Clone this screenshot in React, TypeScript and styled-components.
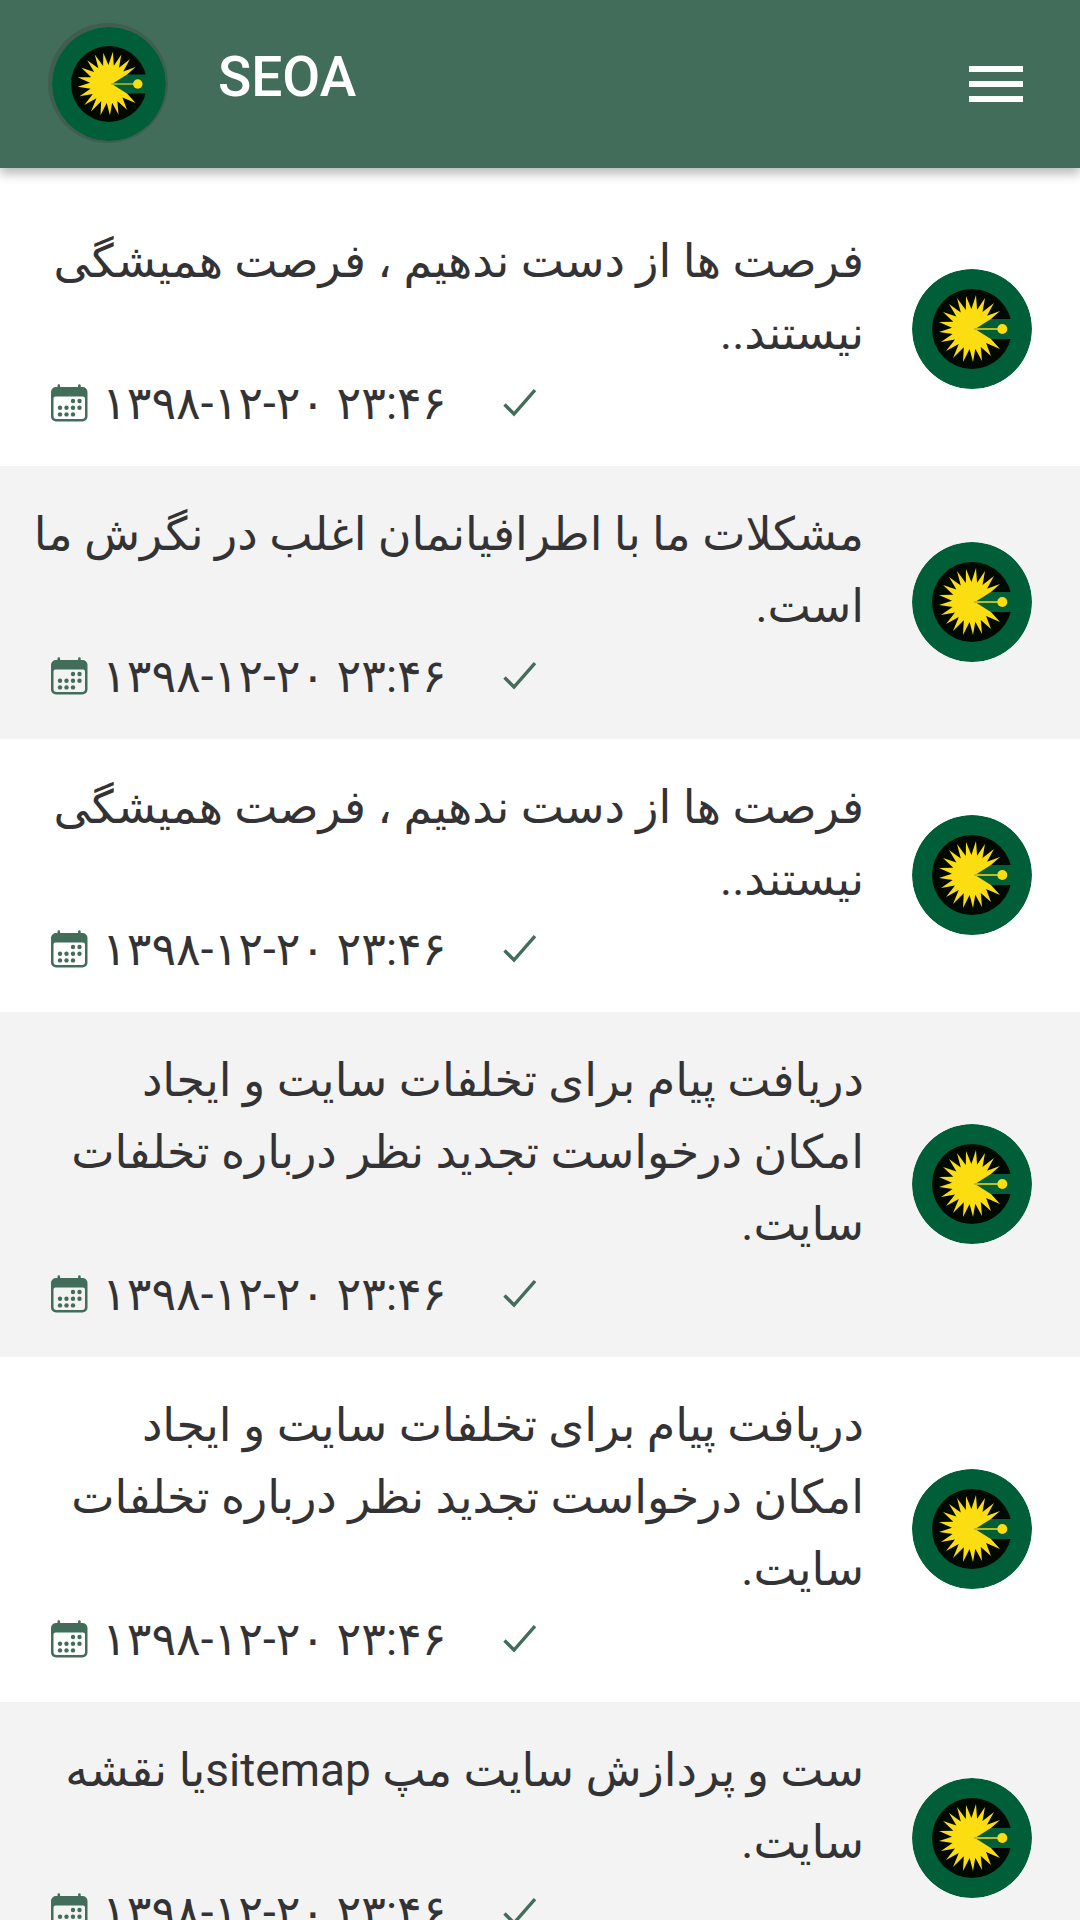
import React from "react";
import styled, { createGlobalStyle } from "styled-components";

const GlobalStyle = createGlobalStyle`
  *, *::before, *::after { box-sizing: border-box; }
  body {
    margin: 0;
    background: #ffffff;
    color: #333335;
    font-family: Roboto, "DejaVu Sans", sans-serif;
  }
`;

const Header = styled.header`
  position: relative;
  display: flex;
  align-items: center;
  gap: 52px;
  height: 168px;
  padding: 0 48px 0 52px;
  background: #426d5a;
  box-shadow: 0 6px 10px rgba(0, 0, 0, 0.27);
`;

const Logo = styled.svg<{ $ringed?: boolean }>`
  display: block;
  flex: none;
  width: ${(p) => (p.$ringed ? 114 : 120)}px;
  height: ${(p) => (p.$ringed ? 114 : 120)}px;
  border-radius: 50%;
  box-shadow: ${(p) => (p.$ringed ? "-1px -1px 0 3px #415d50" : "none")};
`;

const Title = styled.h1`
  flex: 1;
  margin: 0;
  padding-bottom: 14px;
  color: #ffffff;
  font-size: 55px;
  line-height: 64px;
  font-weight: 500;
`;

const MenuButton = styled.button`
  display: flex;
  padding: 8px;
  border: 0;
  background: none;
  cursor: pointer;
`;

const List = styled.ul`
  margin: 0;
  padding: 25px 0 0;
  list-style: none;
`;

const Row = styled.li`
  display: flex;
  align-items: center;
  gap: 48px;
  padding: 32px 48px 33px;

  &:nth-child(even) {
    background: #f3f3f3;
  }
`;

const Body = styled.div`
  flex: 1;
  min-width: 0;
`;

const Message = styled.p`
  margin: 0;
  font-size: 46px;
  line-height: 72px;
  white-space: nowrap;
`;

const Meta = styled.div`
  display: flex;
  align-items: center;
  direction: ltr;
  height: 64px;
  padding-top: 4px;
`;

const Stamp = styled.time`
  min-width: 352px;
  margin: 0 48px 0 14px;
  font-size: 46px;
  line-height: 60px;
  white-space: nowrap;
`;

const tips = [
  [88, 42], [82, 34], [73, 29], [64, 26], [54, 27], [45, 29], [37, 35], [31, 43], [27, 53],
  [27, 63], [29, 73], [34, 82], [41, 89], [51, 93], [61, 93], [70, 92], [79, 87], [88, 80],
];

const sunPath = (() => {
  const points: string[] = ["63,60", "79,50"];
  tips.forEach(([x, y], i) => {
    points.push(`${x},${y}`);
    const next = tips[i + 1];
    if (!next) return;
    const dx = (x + next[0]) / 2 - 60;
    const dy = (y + next[1]) / 2 - 60;
    const k = 20 / Math.hypot(dx, dy);
    points.push(`${(60 + dx * k).toFixed(1)},${(60 + dy * k).toFixed(1)}`);
  });
  points.push("79,70");
  return `M${points.join("L")}Z`;
})();

const Emblem = ({ ringed }: { ringed?: boolean }) => (
  <Logo $ringed={ringed} viewBox="0 0 120 120" aria-hidden="true">
    <circle cx="60" cy="60" r="60" fill="#005f39" />
    <circle cx="60" cy="60" r="40" fill="#000800" />
    <path d="M62 60L79 50H104V70H79Z" fill="#005f39" />
    <path d={sunPath} fill="#fbdd12" />
    <path d="M62 60H88" stroke="#bcbd1b" strokeWidth="1.8" />
    <circle cx="90.3" cy="60" r="5" fill="#fbdd12" />
  </Logo>
);

const CalendarIcon = () => (
  <svg width="40" height="38" viewBox="-1 0 40 38" aria-hidden="true">
    <path
      fill="#426d5a"
      fillRule="evenodd"
      d="M8.5 1.5a1.3 1.3 0 0 1 2.6 0V3h18V1.5a1.3 1.3 0 0 1 2.6 0V3H33.5a5 5 0 0 1 5 5v24.5a5 5 0 0 1-5 5H7a5 5 0 0 1-5-5V8a5 5 0 0 1 5-5h1.5zM6.5 12.5a2 2 0 0 0-2 2V32a3 3 0 0 0 3 3H33a3 3 0 0 0 3-3V14.5a2 2 0 0 0-2-2z"
    />
    <g fill="#426d5a">
      {[
        [24, 17], [30.5, 17],
        [11, 23.7], [17.5, 23.7], [24, 23.7], [30.5, 23.7],
        [11, 30.4], [17.5, 30.4], [24, 30.4],
      ].map(([x, y]) => (
        <circle key={`${x}-${y}`} cx={x} cy={y} r="2.2" />
      ))}
    </g>
  </svg>
);

const CheckIcon = () => (
  <svg width="34" height="30" viewBox="0 0 34 30" aria-hidden="true">
    <path d="M2.5 16.5L12 26L33 2" fill="none" stroke="#426d5a" strokeWidth="3.4" />
  </svg>
);

const messages: string[][] = [
  ["فرصت ها از دست ندهیم ، فرصت همیشگی", "نیستند.."],
  ["مشکلات ما با اطرافیانمان اغلب در نگرش ما", "است."],
  ["فرصت ها از دست ندهیم ، فرصت همیشگی", "نیستند.."],
  ["دریافت پیام برای تخلفات سایت و ایجاد", "امکان درخواست تجدید نظر درباره تخلفات", "سایت."],
  ["دریافت پیام برای تخلفات سایت و ایجاد", "امکان درخواست تجدید نظر درباره تخلفات", "سایت."],
  ["ست و پردازش سایت مپ sitemapیا نقشه", "سایت."],
];

export default function App() {
  return (
    <>
      <GlobalStyle />
      <Header>
        <Emblem ringed />
        <Title>SEOA</Title>
        <MenuButton type="button" aria-label="Menu">
          <svg width="56" height="36" viewBox="0 0 56 36" aria-hidden="true">
            <path d="M1 3H55M1 18H55M1 33H55" stroke="#ffffff" strokeWidth="6" />
          </svg>
        </MenuButton>
      </Header>
      <List dir="rtl" lang="fa">
        {messages.map((lines, i) => (
          <Row key={i}>
            <Emblem />
            <Body>
              <Message>
                {lines.map((line, n) => (
                  <React.Fragment key={n}>
                    {n > 0 && <br />}
                    {line}
                  </React.Fragment>
                ))}
              </Message>
              <Meta>
                <CalendarIcon />
                <Stamp>۱۳۹۸-۱۲-۲۰ ۲۳:۴۶</Stamp>
                <CheckIcon />
              </Meta>
            </Body>
          </Row>
        ))}
      </List>
    </>
  );
}
